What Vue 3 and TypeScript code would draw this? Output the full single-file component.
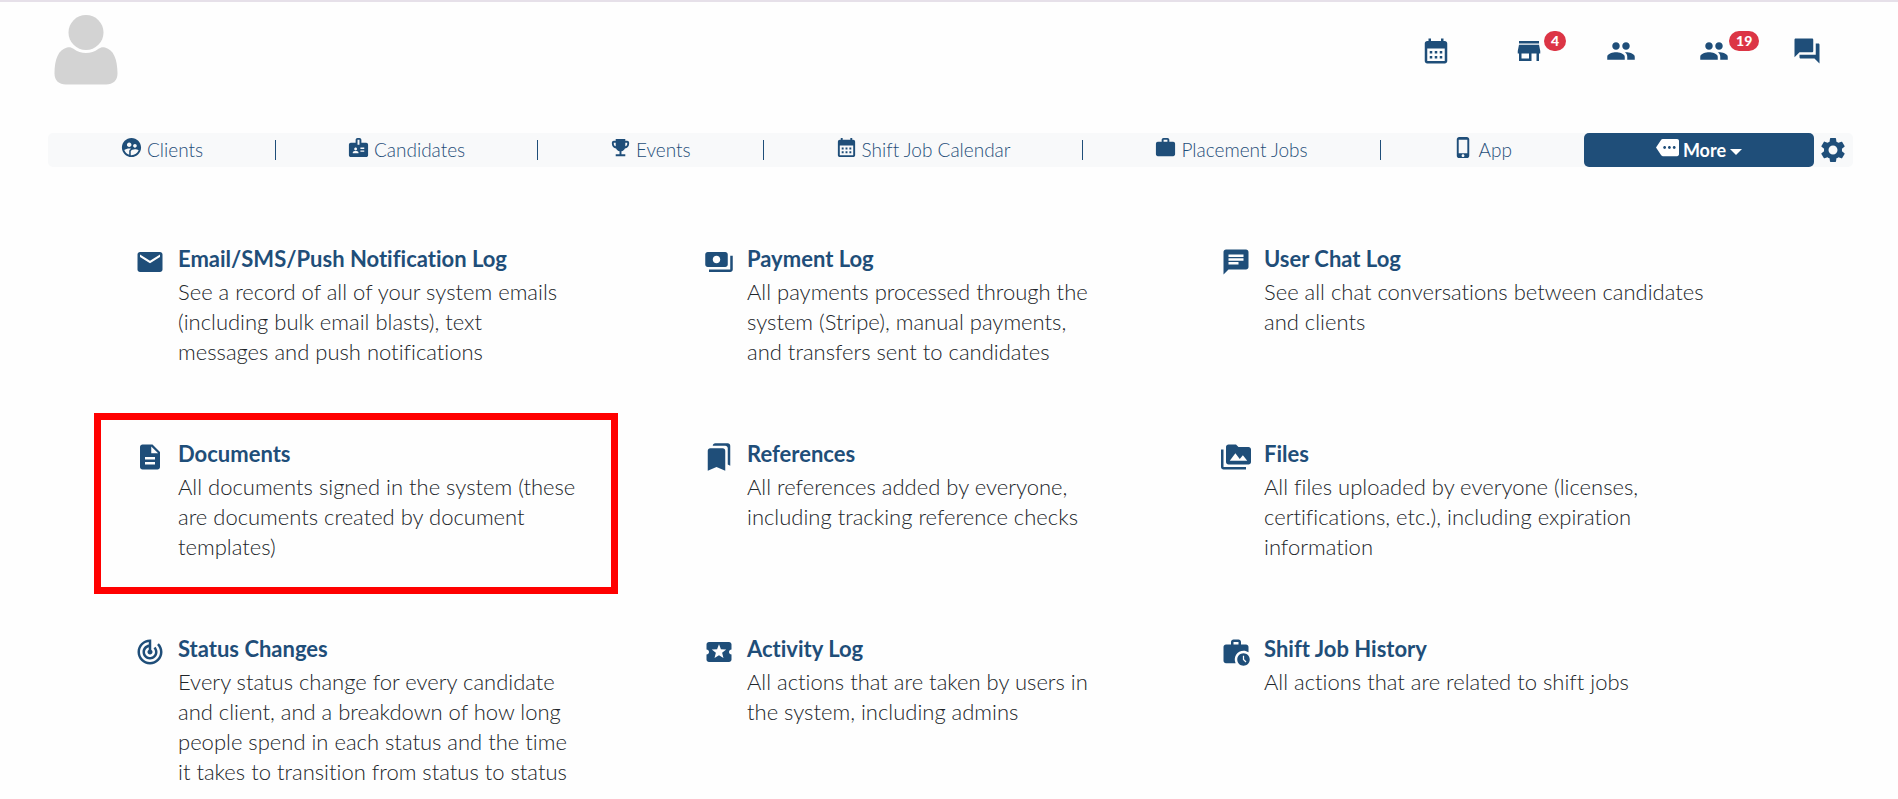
<script setup lang="ts">
interface QuickLink {
  label: string
  icon: string
  badge?: string
}

interface NavItem {
  label: string
  icon: string
}

interface LogCard {
  title: string
  text: string
  icon: string
  highlighted?: boolean
}

const icons: Record<string, string> = {
  calendar:
    'M19 4h-1V2h-2v2H8V2H6v2H5c-1.11 0-1.99.9-1.99 2L3 20c0 1.1.89 2 2 2h14c1.1 0 2-.9 2-2V6c0-1.1-.9-2-2-2zm0 16H5V10h14v10zM9 14H7v-2h2v2zm4 0h-2v-2h2v2zm4 0h-2v-2h2v2zm-8 4H7v-2h2v2zm4 0h-2v-2h2v2zm4 0h-2v-2h2v2z',
  store: 'M20 4H4v2h16V4zm1 10v-2l-1-5H4l-1 5v2h1v6h10v-6h4v6h2v-6h1zm-9 4H6v-4h6v4z',
  people:
    'M16 11c1.66 0 2.99-1.34 2.99-3S17.66 5 16 5c-1.66 0-3 1.34-3 3s1.34 3 3 3zm-8 0c1.66 0 2.99-1.34 2.99-3S9.66 5 8 5C6.34 5 5 6.34 5 8s1.34 3 3 3zm0 2c-2.33 0-7 1.17-7 3.5V19h14v-2.5c0-2.33-4.67-3.5-7-3.5zm8 0c-.29 0-.62.02-.97.05 1.16.84 1.97 1.97 1.97 3.45V19h6v-2.5c0-2.33-4.67-3.5-7-3.5z',
  forum:
    'M21 6h-2v9H6v2c0 .55.45 1 1 1h11l4 4V7c0-.55-.45-1-1-1zm-4 6V3c0-.55-.45-1-1-1H3c-.55 0-1 .45-1 1v14l4-4h10c.55 0 1-.45 1-1z',
  clients:
    'M11.99 2c-5.52 0-10 4.48-10 10s4.48 10 10 10 10-4.48 10-10-4.48-10-10-10zm3.61 6.34c1.07 0 1.93.86 1.93 1.93 0 1.07-.86 1.93-1.93 1.93-1.07 0-1.93-.86-1.93-1.93-.01-1.07.86-1.93 1.93-1.93zm-6-1.58c1.3 0 2.36 1.06 2.36 2.36 0 1.3-1.06 2.36-2.36 2.36s-2.36-1.06-2.36-2.36c0-1.31 1.05-2.36 2.36-2.36zm0 9.13v3.75c-2.4-.75-4.3-2.6-5.14-4.96 1.05-1.12 3.67-1.69 5.14-1.69.53 0 1.2.08 1.9.22-1.64.87-1.9 2.02-1.9 2.68zM11.99 20c-.27 0-.53-.01-.79-.04v-4.07c0-1.42 2.94-2.13 4.4-2.13 1.07 0 2.92.39 3.84 1.15-1.17 2.97-4.06 5.09-7.45 5.09z',
  candidates:
    'M20 7h-5V4c0-1.1-.9-2-2-2h-2c-1.1 0-2 .9-2 2v3H4c-1.1 0-2 .9-2 2v11c0 1.1.9 2 2 2h16c1.1 0 2-.9 2-2V9c0-1.1-.9-2-2-2zM9 12c.83 0 1.5.67 1.5 1.5S9.83 15 9 15s-1.5-.67-1.5-1.5S8.17 12 9 12zm3 6H6v-.75c0-1 2-1.5 3-1.5s3 .5 3 1.5V18zm1-9h-2V4h2v5zm5 7.5h-4V15h4v1.5zm0-3h-4V12h4v1.5z',
  trophy:
    'M19 5h-2V3H7v2H5c-1.1 0-2 .9-2 2v1c0 2.55 1.92 4.63 4.39 4.94.63 1.5 1.98 2.63 3.61 2.96V19H7v2h10v-2h-4v-3.1c1.63-.33 2.98-1.46 3.61-2.96C19.08 12.63 21 10.55 21 8V7c0-1.1-.9-2-2-2zM5 8V7h2v3.82C5.84 10.4 5 9.3 5 8zm14 0c0 1.3-.84 2.4-2 2.82V7h2v1z',
  work: 'M20 6h-4V4c0-1.11-.89-2-2-2h-4c-1.11 0-2 .89-2 2v2H4c-1.11 0-1.99.89-1.99 2L2 19c0 1.11.89 2 2 2h16c1.11 0 2-.89 2-2V8c0-1.11-.89-2-2-2zm-6 0h-4V4h4v2z',
  phone:
    'M15.5 1h-8C6.12 1 5 2.12 5 3.5v17C5 21.88 6.12 23 7.5 23h8c1.38 0 2.5-1.12 2.5-2.5v-17C18 2.12 16.88 1 15.5 1zm-4 21c-.83 0-1.5-.67-1.5-1.5s.67-1.5 1.5-1.5 1.5.67 1.5 1.5-.67 1.5-1.5 1.5zm4.5-4H7V4h9v14z',
  more: 'M22 3H7c-.69 0-1.23.35-1.59.88L0 12l5.41 8.11c.36.53.97.89 1.66.89H22c1.1 0 2-.9 2-2V5c0-1.1-.9-2-2-2zM9 13.5c-.83 0-1.5-.67-1.5-1.5s.67-1.5 1.5-1.5 1.5.67 1.5 1.5-.67 1.5-1.5 1.5zm5 0c-.83 0-1.5-.67-1.5-1.5s.67-1.5 1.5-1.5 1.5.67 1.5 1.5-.67 1.5-1.5 1.5zm5 0c-.83 0-1.5-.67-1.5-1.5s.67-1.5 1.5-1.5 1.5.67 1.5 1.5-.67 1.5-1.5 1.5z',
  settings:
    'M19.14 12.94c.04-.3.06-.61.06-.94 0-.32-.02-.64-.07-.94l2.03-1.58c.18-.14.23-.41.12-.61l-1.92-3.32c-.12-.22-.37-.29-.59-.22l-2.39.96c-.5-.38-1.03-.7-1.62-.94l-.36-2.54c-.04-.24-.24-.41-.48-.41h-3.84c-.24 0-.43.17-.47.41l-.36 2.54c-.59.24-1.13.57-1.62.94l-2.39-.96c-.22-.08-.47 0-.59.22L2.74 8.87c-.12.21-.08.47.12.61l2.03 1.58c-.05.3-.09.63-.09.94s.02.64.07.94l-2.03 1.58c-.18.14-.23.41-.12.61l1.92 3.32c.12.22.37.29.59.22l2.39-.96c.5.38 1.03.7 1.62.94l.36 2.54c.05.24.24.41.48.41h3.84c.24 0 .44-.17.47-.41l.36-2.54c.59-.24 1.13-.56 1.62-.94l2.39.96c.22.08.47 0 .59-.22l1.92-3.32c.12-.22.07-.47-.12-.61l-2.01-1.58zM12 15.6c-1.98 0-3.6-1.62-3.6-3.6s1.62-3.6 3.6-3.6 3.6 1.62 3.6 3.6-1.62 3.6-3.6 3.6z',
  mail: 'M20 4H4c-1.1 0-1.99.9-1.99 2L2 18c0 1.1.9 2 2 2h16c1.1 0 2-.9 2-2V6c0-1.1-.9-2-2-2zm0 4l-8 5-8-5V6l8 5 8-5v2z',
  payments:
    'M19 14V6c0-1.1-.9-2-2-2H3c-1.1 0-2 .9-2 2v8c0 1.1.9 2 2 2h14c1.1 0 2-.9 2-2zm-9-1c-1.66 0-3-1.34-3-3s1.34-3 3-3 3 1.34 3 3-1.34 3-3 3zm13-6v11c0 1.1-.9 2-2 2H4v-2h17V7h2z',
  chat: 'M20 2H4c-1.1 0-1.99.9-1.99 2L2 22l4-4h14c1.1 0 2-.9 2-2V4c0-1.1-.9-2-2-2zM6 9h12v2H6V9zm8 5H6v-2h8v2zm4-6H6V6h12v2z',
  document:
    'M14 2H6c-1.1 0-1.99.9-1.99 2L4 20c0 1.1.89 2 1.99 2H18c1.1 0 2-.9 2-2V8l-6-6zm2 16H8v-2h8v2zm0-4H8v-2h8v2zm-3-5V3.5L18.5 9H13z',
  bookmarks:
    'M19 18l2 1V3c0-1.1-.9-2-2-2H8.99C7.89 1 7 1.9 7 3h10c1.1 0 2 .9 2 2v13zM15 5H5c-1.1 0-2 .9-2 2v16l7-3 7 3V7c0-1.1-.9-2-2-2z',
  media:
    'M2 6H0v5h.01L0 20c0 1.1.9 2 2 2h18v-2H2V6zm20-2h-8l-2-2H6c-1.1 0-1.99.9-1.99 2L4 16c0 1.1.9 2 2 2h16c1.1 0 2-.9 2-2V6c0-1.1-.9-2-2-2zM7 15l4.5-6 3.5 4.51 2.5-3.01L21 15H7z',
  track:
    'M19.07 4.93l-1.41 1.41C19.1 7.79 20 9.79 20 12c0 4.42-3.58 8-8 8s-8-3.58-8-8c0-4.08 3.05-7.44 7-7.93v2.02C8.16 6.57 6 9.03 6 12c0 3.31 2.69 6 6 6s6-2.69 6-6c0-1.66-.67-3.16-1.76-4.24l-1.41 1.41C15.55 9.9 16 10.9 16 12c0 2.21-1.79 4-4 4s-4-1.79-4-4c0-1.86 1.28-3.41 3-3.86v2.14c-.6.35-1 .98-1 1.72 0 1.1.9 2 2 2s2-.9 2-2c0-.74-.4-1.38-1-1.72V2h-1C6.48 2 2 6.48 2 12s4.48 10 10 10 10-4.48 10-10c0-2.76-1.12-5.26-2.93-7.07z',
  activity:
    'M20 12c0-1.1.9-2 2-2V6c0-1.1-.9-2-2-2H4c-1.1 0-1.99.9-1.99 2v4c1.1 0 1.99.9 1.99 2s-.89 2-2 2v4c0 1.1.9 2 2 2h16c1.1 0 2-.9 2-2v-4c-1.1 0-2-.9-2-2zm-4.42 4.8L12 14.5l-3.58 2.3 1.08-4.12-3.29-2.69 4.24-.25L12 5.8l1.54 3.95 4.24.25-3.29 2.69 1.09 4.11z',
  workHistory:
    'M18 11c1.49 0 2.87.47 4 1.26V8c0-1.11-.89-2-2-2h-4V4c0-1.11-.89-2-2-2h-4c-1.11 0-2 .89-2 2v2H4c-1.11 0-1.99.89-1.99 2L2 19c0 1.11.89 2 2 2h7.68A6.995 6.995 0 0 1 18 11zm-8-7h4v2h-4V4zM18 13c-2.76 0-5 2.24-5 5s2.24 5 5 5 5-2.24 5-5-2.24-5-5-5zm1.65 7.35L17.5 18.2V15h1v2.79l1.85 1.85-.7.71z',
}

const quickLinks: QuickLink[] = [
  { label: 'Calendar', icon: 'calendar' },
  { label: 'New clients', icon: 'store', badge: '4' },
  { label: 'Candidates', icon: 'people' },
  { label: 'New candidates', icon: 'people', badge: '19' },
  { label: 'Messages', icon: 'forum' },
]

const navItems: NavItem[] = [
  { label: 'Clients', icon: 'clients' },
  { label: 'Candidates', icon: 'candidates' },
  { label: 'Events', icon: 'trophy' },
  { label: 'Shift Job Calendar', icon: 'calendar' },
  { label: 'Placement Jobs', icon: 'work' },
  { label: 'App', icon: 'phone' },
]

const cards: LogCard[] = [
  {
    title: 'Email/SMS/Push Notification Log',
    text: 'See a record of all of your system emails\n(including bulk email blasts), text\nmessages and push notifications',
    icon: 'mail',
  },
  {
    title: 'Payment Log',
    text: 'All payments processed through the\nsystem (Stripe), manual payments,\nand transfers sent to candidates',
    icon: 'payments',
  },
  {
    title: 'User Chat Log',
    text: 'See all chat conversations between candidates\nand clients',
    icon: 'chat',
  },
  {
    title: 'Documents',
    text: 'All documents signed in the system (these\nare documents created by document\ntemplates)',
    icon: 'document',
    highlighted: true,
  },
  {
    title: 'References',
    text: 'All references added by everyone,\nincluding tracking reference checks',
    icon: 'bookmarks',
  },
  {
    title: 'Files',
    text: 'All files uploaded by everyone (licenses,\ncertifications, etc.), including expiration\ninformation',
    icon: 'media',
  },
  {
    title: 'Status Changes',
    text: 'Every status change for every candidate\nand client, and a breakdown of how long\npeople spend in each status and the time\nit takes to transition from status to status',
    icon: 'track',
  },
  {
    title: 'Activity Log',
    text: 'All actions that are taken by users in\nthe system, including admins',
    icon: 'activity',
  },
  {
    title: 'Shift Job History',
    text: 'All actions that are related to shift jobs',
    icon: 'workHistory',
  },
]
</script>

<template>
  <div class="page">
    <header class="header">
      <a class="avatar" href="#" aria-label="Profile">
        <svg viewBox="0 0 64 70" width="64" height="70" aria-hidden="true">
          <circle cx="32" cy="17.5" r="17.5" />
          <path
            d="M13 32.4C15.500 31.800 17.500 32.200 19.500 33.700C27 39.500 37 39.500 44.500 33.700C46.500 32.200 48.500 31.800 51 32.400C59.500 34.500 63.500 44 63.500 58.500C63.500 65.500 59 69.500 52 69.500H12C5 69.500 .5 65.500 .5 58.500C.5 44 4.500 34.500 13 32.400Z"
          />
        </svg>
      </a>
      <ul class="quick">
        <li v-for="link in quickLinks" :key="link.label">
          <a href="#" class="quick-link" :aria-label="link.label">
            <svg class="icon icon-lg" viewBox="0 0 24 24" aria-hidden="true">
              <path :d="icons[link.icon]" />
            </svg>
            <span v-if="link.badge" class="badge">{{ link.badge }}</span>
          </a>
        </li>
      </ul>
    </header>

    <nav class="nav">
      <a v-for="item in navItems" :key="item.label" href="#" class="nav-item">
        <svg class="icon icon-sm" viewBox="0 0 24 24" aria-hidden="true">
          <path :d="icons[item.icon]" />
        </svg>
        <span>{{ item.label }}</span>
      </a>
      <button type="button" class="more" aria-expanded="true">
        <svg class="icon icon-sm" viewBox="0 0 24 24" aria-hidden="true">
          <path :d="icons.more" />
        </svg>
        <span>More</span>
        <span class="caret"></span>
      </button>
      <button type="button" class="settings" aria-label="Settings">
        <svg class="icon icon-lg" viewBox="0 0 24 24" aria-hidden="true">
          <path :d="icons.settings" />
        </svg>
      </button>
    </nav>

    <main class="cards">
      <article
        v-for="card in cards"
        :key="card.title"
        class="card"
        :class="{ highlighted: card.highlighted }"
      >
        <svg class="icon icon-lg card-icon" viewBox="0 0 24 24" aria-hidden="true">
          <path :d="icons[card.icon]" />
        </svg>
        <div class="card-body">
          <h2><a href="#">{{ card.title }}</a></h2>
          <p>{{ card.text }}</p>
        </div>
      </article>
    </main>
  </div>
</template>

<style>
body {
  margin: 0;
  background: #fefefe;
}
</style>

<style scoped>
.page {
  border-top: 2px solid #e6e0e9;
  padding: 0 45px 0 48px;
  color: #212529;
  font-family: Lato, 'Open Sans', sans-serif;
  font-size: 22px;
  font-weight: 300;
  font-variant-ligatures: none;
  line-height: 30px;
}

a {
  color: #1f4e79;
  text-decoration: none;
}

button {
  border: 0;
  padding: 0;
  font: inherit;
  cursor: pointer;
}

.icon {
  display: block;
  flex: none;
  fill: currentColor;
}

.icon-lg {
  width: 30px;
  height: 30px;
}

.icon-sm {
  width: 23px;
  height: 23px;
}

.header {
  display: flex;
  justify-content: space-between;
  align-items: flex-start;
  padding: 13px 0 48px 6px;
}

.avatar svg {
  display: block;
  fill: #d3d3d3;
}

.quick {
  display: flex;
  width: 26%;
  max-width: 463px;
  min-width: 300px;
  margin: 21px 0 0;
  padding: 0;
  list-style: none;
}

.quick li {
  flex: 1;
  display: flex;
  justify-content: center;
}

.quick-link {
  position: relative;
}

.badge {
  position: absolute;
  left: 100%;
  top: -5px;
  padding: 0 7px;
  border-radius: 10px;
  background: #dc3545;
  color: #fff;
  font-size: 14px;
  font-weight: 900;
  line-height: 20px;
}

.nav {
  display: flex;
  align-items: center;
  min-height: 34px;
  border-radius: 5px;
  background: #f8f9fa;
  font-size: 19px;
}

.nav-item {
  position: relative;
  flex: 1 1 auto;
  display: flex;
  justify-content: center;
  align-items: center;
  gap: 4px;
  white-space: nowrap;
}

.nav-item .icon,
.more .icon {
  margin-bottom: 5px;
}

.nav-item + .nav-item::before {
  content: '';
  position: absolute;
  left: 0;
  top: 5px;
  width: 1px;
  height: 20px;
  background: #1f4e79;
}

.more {
  flex: 1 1 auto;
  display: flex;
  justify-content: center;
  align-items: center;
  gap: 4px;
  height: 34px;
  border-radius: 5px;
  background: #1f4e79;
  color: #fff;
  font-size: 18px;
  font-weight: 700;
}

.caret {
  margin-top: 3px;
  border-top: 6px solid #fff;
  border-right: 6px solid transparent;
  border-left: 6px solid transparent;
}

.settings {
  display: flex;
  justify-content: center;
  width: 39px;
  background: none;
  color: #1f4e79;
}

.cards {
  display: grid;
  grid-template-columns: 569fr 517fr 545fr;
  row-gap: 72px;
  padding: 77px 87px 0;
}

.card {
  position: relative;
  display: flex;
  align-items: flex-start;
  gap: 13px;
}

.card-icon {
  margin-top: 3px;
  color: #1f4e79;
}

.card h2 {
  margin: 0 0 3px;
  font-size: 22px;
  font-weight: 700;
  line-height: 30px;
}

.card p {
  margin: 0;
  white-space: pre-line;
}

.highlighted::after {
  content: '';
  position: absolute;
  inset: -26px 86px -32px -41px;
  border: 7px solid #f00;
  pointer-events: none;
}
</style>
